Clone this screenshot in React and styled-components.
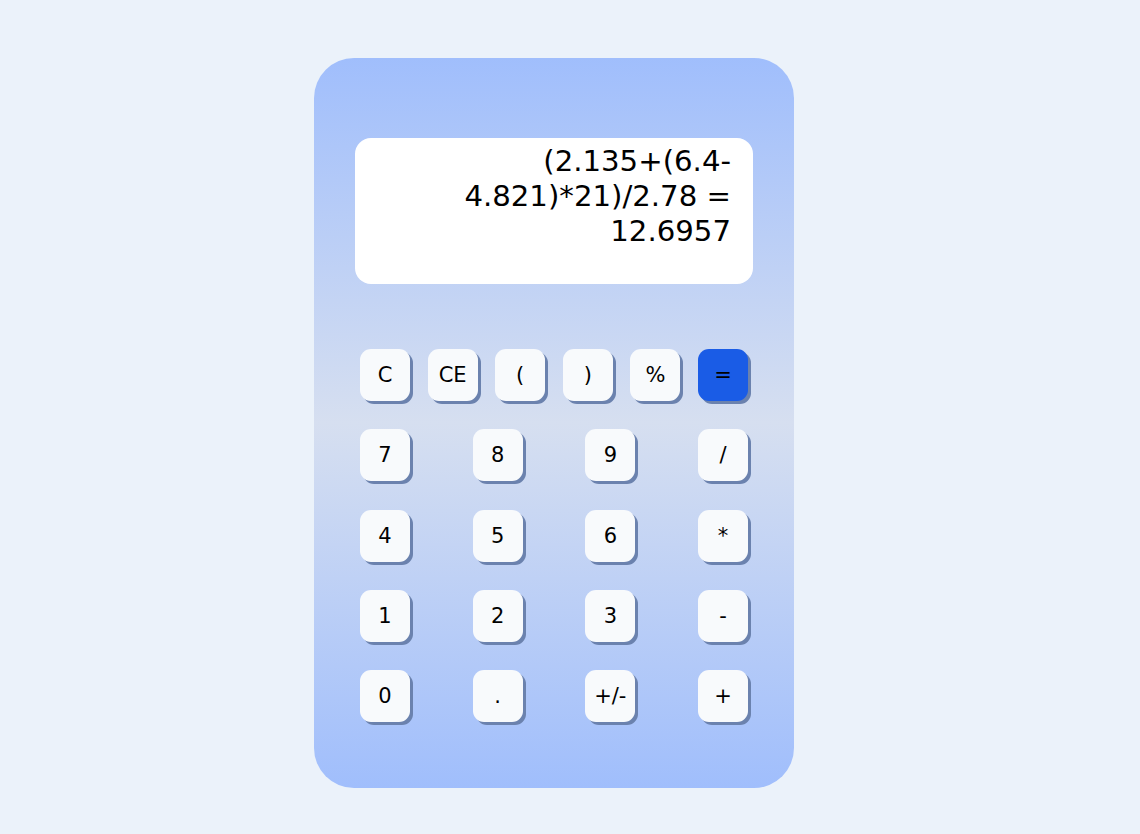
import React from 'react';
import styled, { createGlobalStyle } from 'styled-components';

const GlobalStyle = createGlobalStyle`
  html, body {
    margin: 0;
    padding: 0;
    background: #ebf2fa;
    font-family: "DejaVu Sans", "Liberation Sans", sans-serif;
  }
`;

const Page = styled.div`
  min-height: 834px;
  padding: 58px 0 0 314px;
  box-sizing: border-box;
`;

const Calculator = styled.div`
  width: 480px;
  height: 730px;
  box-sizing: border-box;
  border-radius: 40px;
  padding: 80px 41px 0;
  background: linear-gradient(180deg, #a0befc 0%, #d6dff0 50%, #a0befc 100%);
  display: flex;
  flex-direction: column;
`;

const Screen = styled.div`
  height: 146px;
  box-sizing: border-box;
  background: #ffffff;
  border-radius: 16px;
  padding: 6px 22px 0;
  text-align: right;
  font-size: 29.2px;
  line-height: 34.8px;
  color: #000;
`;

const Keypad = styled.div`
  margin: 65px 5px 0;
  display: flex;
  flex-direction: column;
  gap: 28.3px;
`;

const Row = styled.div`
  display: flex;
  justify-content: space-between;
`;

const Key = styled.button`
  width: 50px;
  height: 52px;
  padding: 0;
  border: none;
  border-radius: 11px;
  background: ${p => (p.$accent ? '#1a5ce6' : '#f8fafc')};
  box-shadow: 3px 3px 0 #6b82ae;
  font-family: "DejaVu Sans", "Liberation Sans", sans-serif;
  font-size: 21px;
  color: #000;
  cursor: pointer;
`;

const topRow = ['C', 'CE', '(', ')', '%', '='];
const rows = [
  ['7', '8', '9', '/'],
  ['4', '5', '6', '*'],
  ['1', '2', '3', '-'],
  ['0', '.', '+/-', '+'],
];

export default function App() {
  return (
    <Page>
      <GlobalStyle />
      <Calculator>
        <Screen>(2.135+(6.4-4.821)*21)/2.78 = 12.6957</Screen>
        <Keypad>
          <Row>
            {topRow.map(k => (
              <Key key={k} $accent={k === '='}>{k}</Key>
            ))}
          </Row>
          {rows.map((r, i) => (
            <Row key={i}>
              {r.map(k => (
                <Key key={k}>{k}</Key>
              ))}
            </Row>
          ))}
        </Keypad>
      </Calculator>
    </Page>
  );
}
